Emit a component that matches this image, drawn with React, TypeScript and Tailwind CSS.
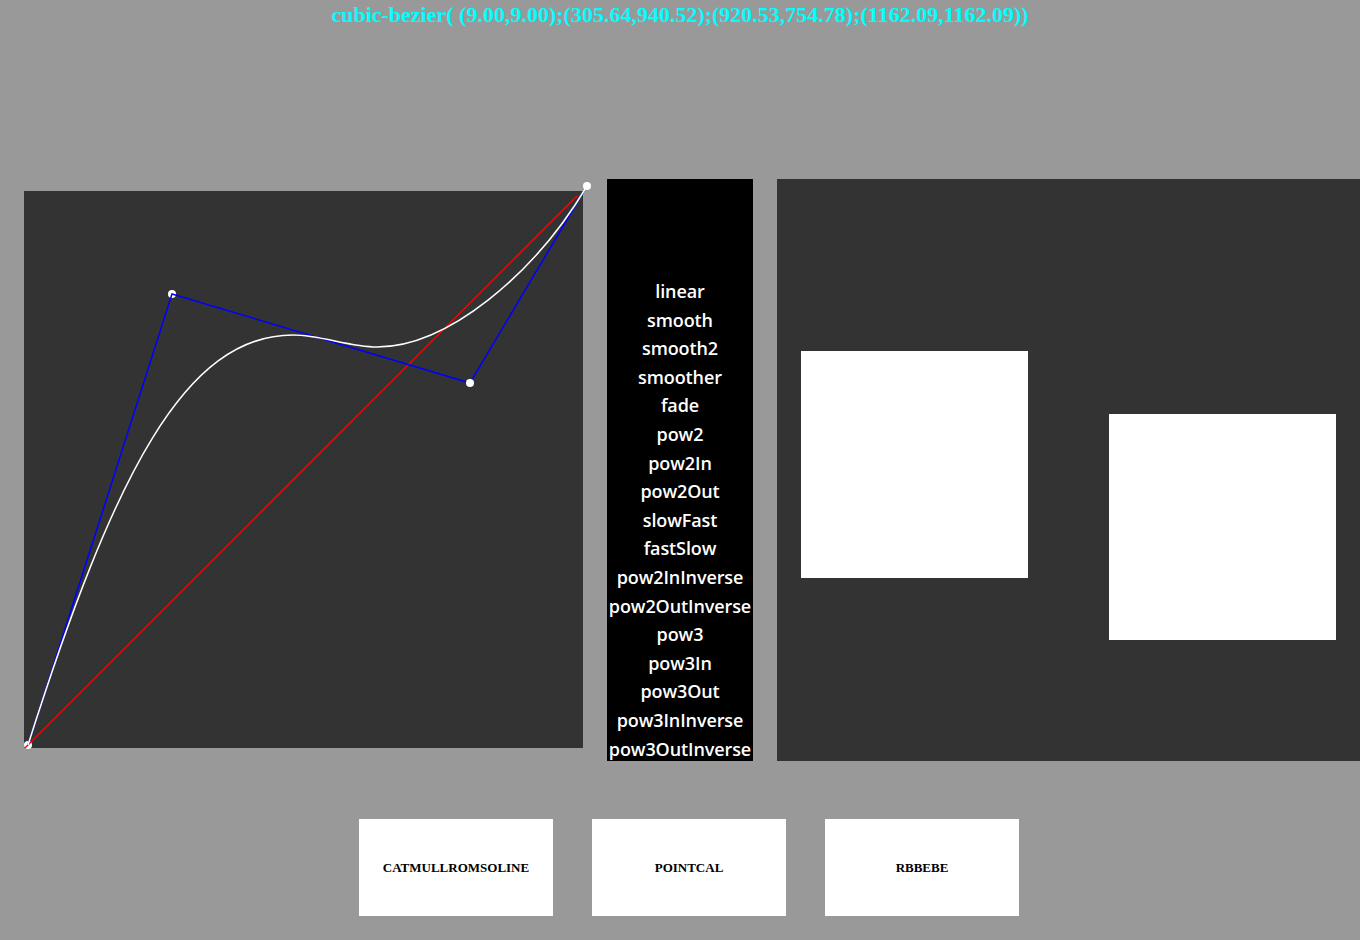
// curve drawn as three joined cubic pieces
const curveD =
  'M 28 745 C 114 474, 185 335, 293 335 ' +
  'C 321 335, 349 347, 377 347 ' +
  'C 447 347, 534 275, 587 186'

const easings = [
  'linear',
  'smooth',
  'smooth2',
  'smoother',
  'fade',
  'pow2',
  'pow2In',
  'pow2Out',
  'slowFast',
  'fastSlow',
  'pow2InInverse',
  'pow2OutInverse',
  'pow3',
  'pow3In',
  'pow3Out',
  'pow3InInverse',
  'pow3OutInverse',
]

const buttons = ['CATMULLROMSOLINE', 'POINTCAL', 'RBBEBE']

function App() {
  return (
    <div className="w-[1360px] h-[940px] bg-[#999999] overflow-hidden">
      <h1 className="text-center text-[22px] leading-[30px] font-bold text-[#00ffff] font-['Liberation_Serif',serif]">
        cubic-bezier( (9.00,9.00);(305.64,940.52);(920.53,754.78);(1162.09,1162.09))
      </h1>

      <div className="flex items-start mt-[149px]">
        {/* curve editor */}
        <div className="relative ml-[24px] mt-[12px] w-[559px] h-[557px] bg-[#333333]">
          <svg className="absolute left-0 top-0 overflow-visible" width="559" height="557">
            <g transform="translate(-24,-191)">
              <circle cx="28" cy="745" r="4" fill="#fff" />
              <circle cx="172" cy="294" r="4" fill="#fff" />
              <line x1="25" y1="748" x2="577" y2="196" stroke="#ff0000" strokeWidth="1.5" />
              <polyline
                points="28,745 172,294 470,383 587,186"
                fill="none"
                stroke="#0000ff"
                strokeWidth="1.5"
              />
              <path d={curveD} fill="none" stroke="#fff" strokeWidth="1.5" />
              <circle cx="470" cy="383" r="4" fill="#fff" />
              <circle cx="587" cy="186" r="4" fill="#fff" />
            </g>
          </svg>
        </div>

        {/* easing list */}
        <div className="ml-[24px] w-[146px] h-[582px] bg-black pt-[98px] font-['Open_Sans',sans-serif] text-white text-[18px] font-semibold leading-[28.6px] text-center whitespace-nowrap tracking-[-0.1px]">
          {easings.map((e) => (
            <div key={e}>{e}</div>
          ))}
        </div>

        {/* preview */}
        <div className="ml-[24px] w-[583px] h-[582px] bg-[#333333] flex items-start pl-[24px] gap-[81px]">
          <div className="mt-[172px] w-[227px] h-[227px] bg-white" />
          <div className="mt-[235px] w-[227px] h-[226px] bg-white" />
        </div>
      </div>

      <div className="flex mt-[58px] pl-[359px] gap-[39px]">
        {buttons.map((b) => (
          <div
            key={b}
            className="w-[194px] h-[97px] bg-white flex items-center justify-center font-['Liberation_Serif',serif] font-bold text-[13px] text-black"
          >
            {b}
          </div>
        ))}
      </div>
    </div>
  )
}

export default App
